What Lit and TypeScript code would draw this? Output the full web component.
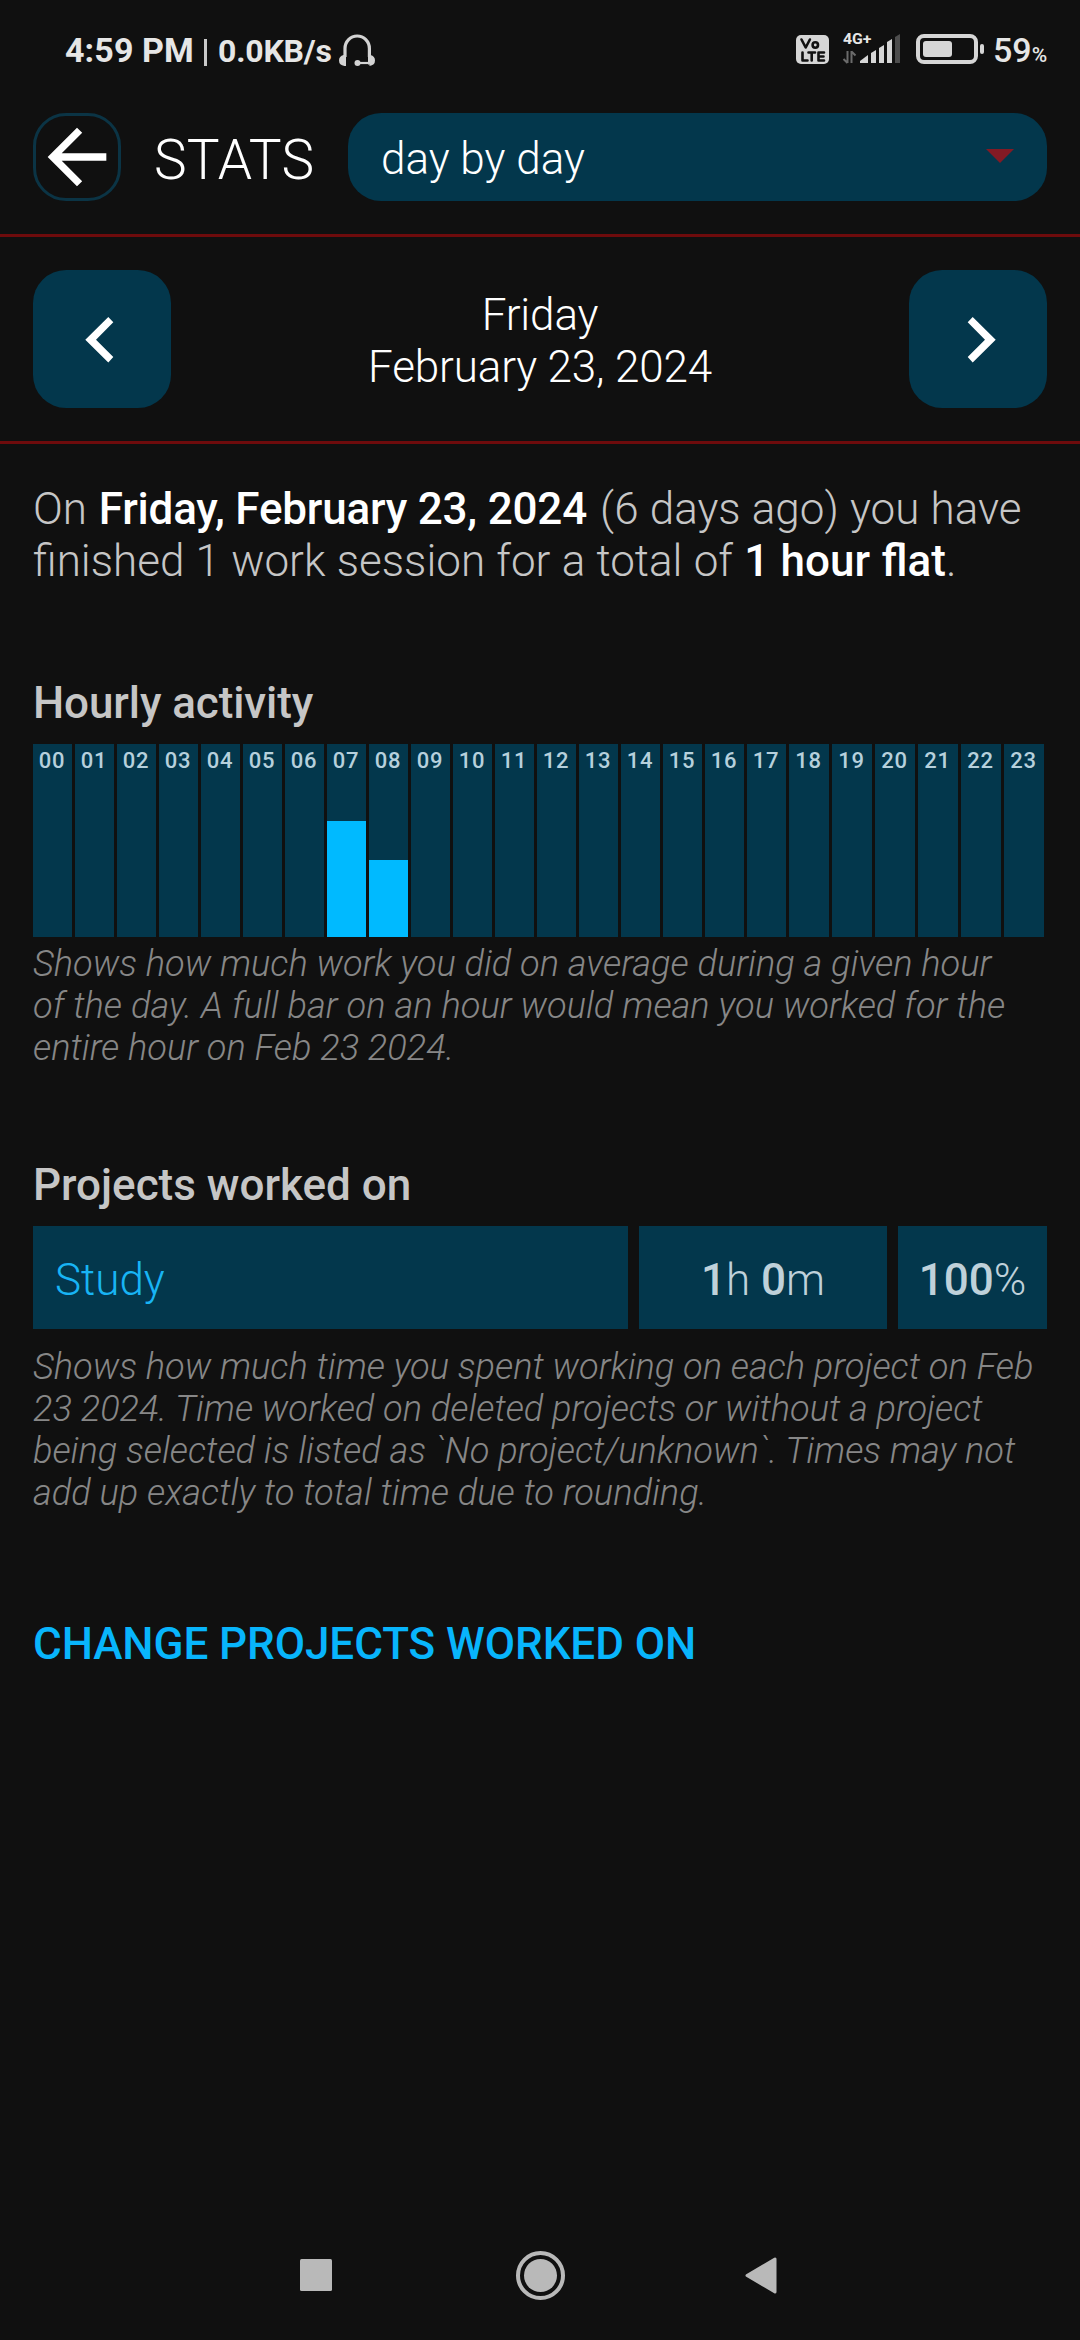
import { LitElement, html, css } from "lit";
import { customElement } from "lit/decorators.js";

const HOURS = Array.from({ length: 24 }, (_, h) => ({
  label: String(h).padStart(2, "0"),
  percent: h === 7 ? 60 : h === 8 ? 40 : 0,
}));

@customElement("status-bar")
class StatusBar extends LitElement {
  static styles = css`
    :host { display: flex; align-items: flex-start; height: 113px; color: #e6e6e6; }
    .time { margin: 28px 0 0 65px; width: 139px; font-size: 34px; line-height: 44px; font-weight: 700; white-space: nowrap; letter-spacing: 0.1px; }
    .rule { margin-top: 39px; width: 3px; height: 27px; background: #c9c9c9; }
    .rate { margin: 29px 0 0 11px; width: 121px; font-size: 32px; line-height: 44px; font-weight: 700; white-space: nowrap; letter-spacing: -0.2px; }
    .headset { display: block; margin-top: 33px; }
    .right { display: block; margin: 30px 0 0 auto; }
    .battery { display: flex; align-items: baseline; margin: 28px 34px 0 9px; width: 53px; font-size: 34px; line-height: 44px; font-weight: 500; }
    .small { font-size: 21px; }
  `;
  render() {
    return html`
      <div class="time">4:59 PM</div>
      <div class="rule"></div>
      <div class="rate">0.0KB/s</div>
      <svg class="headset" width="36" height="34" viewBox="0 0 36 34">
        <path d="M6 24V15.500a12.200 12.500 0 0 1 24.400 0V24" fill="none" stroke="#d3d3d3" stroke-width="3.200" />
        <path d="M4.500 22H7v11H5.500Q0 32 0 27.500T4.500 22zM31.500 22H29v9.500h1.500v1.500Q36 32 36 27.500T31.500 22z" fill="#d3d3d3" />
        <circle cx="18.500" cy="30" r="3" fill="#d3d3d3" />
        <path d="M18 30H30" stroke="#d3d3d3" stroke-width="2.200" />
      </svg>
      <svg class="right" width="190" height="38" viewBox="0 0 190 38">
        <rect x="2" y="5" width="33" height="29" rx="5" fill="#d6d6d6" />
        <g fill="none" stroke="#111" stroke-width="2.600" stroke-linecap="round" stroke-linejoin="round"><path d="M7.500 9.500l4.200 8 4.200-8M8.500 22.500v8h5M14.500 22.500h6.500M17.700 22.500v8M30 22.500h-5.500v8H30M24.500 26.500h5" /><circle cx="21.300" cy="15" r="2.700" /></g>
        <text x="49" y="13.700" font-size="15.500" font-weight="700" fill="#e6e6e6" textLength="28.500" lengthAdjust="spacingAndGlyphs">4G+</text>
        <path d="M53.500 21v12M53.500 33l-4-4M57.500 33V21M57.500 21.500l4 4" fill="none" stroke="#6b6b6b" stroke-width="2" />
        <g fill="#d6d6d6"><path d="M66 33v-2l8-6v8z" /><path d="M77 33V23l5-3v13z" /><path d="M85 33V18l5-3v18z" /><path d="M93 33V12l5-3v24z" /></g>
        <path d="M101 33V7l5-3v29z" fill="#4d4d4d" />
        <rect x="124" y="6" width="58" height="26" rx="6" fill="none" stroke="#d6d6d6" stroke-width="4" />
        <rect x="129" y="11" width="29" height="16" rx="3" fill="#d6d6d6" />
        <rect x="186" y="14" width="4" height="10" rx="2" fill="#d6d6d6" />
      </svg>
      <div class="battery">59<span class="small">%</span></div>
    `;
  }
}

@customElement("hour-chart")
class HourChart extends LitElement {
  static styles = css`
    :host { display: grid; grid-template-columns: repeat(18, 39px) repeat(6, 40px); column-gap: 3px; height: 193px; }
    .slot { position: relative; display: flex; align-items: flex-end; background: #03374c; }
    .fill { width: 100%; background: #00baff; }
    .label { position: absolute; left: 0; right: 1px; top: 4px; text-align: center; font-size: 22px; line-height: 26px; font-weight: 500; letter-spacing: 0.8px; color: #b6d0dc; }
  `;
  render() {
    return HOURS.map(
      (h) => html`<div class="slot">
        <div class="fill" style="height:${h.percent}%"></div>
        <span class="label">${h.label}</span>
      </div>`
    );
  }
}

@customElement("app-root")
class AppRoot extends LitElement {
  static styles = css`
    :host { display: flex; flex-direction: column; width: 1080px; height: 2340px; overflow: hidden; background: #101010; color: #fff; font-family: Roboto, "Liberation Sans", sans-serif; font-size: 44px; line-height: 52px; font-weight: 300; }
    * { box-sizing: border-box; }
    .header { display: flex; align-items: flex-start; height: 124px; padding: 0 33px; border-bottom: 3px solid #6e0b0c; }
    .back { width: 88px; height: 88px; border: 3px solid #0b3445; border-radius: 33px; display: flex; align-items: center; justify-content: center; flex: none; }
    .back svg { flex: none; }
    .title { width: 227px; padding: 15px 0 0 33px; font-size: 55px; line-height: 64px; white-space: nowrap; letter-spacing: 0.2px; }
    .select { flex: 1; height: 88px; border-radius: 33px; background: #03374c; display: flex; align-items: center; justify-content: space-between; padding: 0 33px; }
    .select span { padding-top: 4px; }
    .day { display: flex; align-items: center; justify-content: space-between; height: 207px; padding: 0 33px; border-bottom: 3px solid #6e0b0c; }
    .step { width: 138px; height: 138px; border-radius: 33px; background: #03374c; }
    .step svg { display: block; }
    .date { text-align: center; padding: 4px 0 0; letter-spacing: -0.15px; }
    .body { padding: 39px 33px 0; }
    .summary { color: #c6c6c6; white-space: nowrap; }
    .summary b { color: #fff; font-weight: 500; }
    .when { margin: 0 2px 0 1px; letter-spacing: -0.2px; }
    .ago { word-spacing: 0.4px; }
    .total { word-spacing: 0.5px; }
    h2 { margin: 0; font-size: 44px; line-height: 52px; font-weight: 500; color: #c6c6c6; }
    .first { margin-top: 90px; margin-bottom: 15px; letter-spacing: -0.1px; }
    .second { margin-top: 90px; margin-bottom: 15px; }
    .note { font-style: italic; font-size: 36.2px; line-height: 42px; color: #878787; white-space: nowrap; }
    .note1 { margin-top: 6px; }
    .note2 { margin-top: 17px; }
    .wide { word-spacing: 0.2px; }
    .row { display: grid; grid-template-columns: 595px 248px 149px; column-gap: 11px; height: 103px; }
    .cell { display: flex; align-items: center; justify-content: center; background: #03374c; color: #bfd1da; white-space: pre; padding-top: 5px; }
    .cell b { font-weight: 500; }
    .name { justify-content: flex-start; padding-left: 22px; color: #18b4f4; }
    .change { margin-top: 104px; font-weight: 500; color: #08b5fc; letter-spacing: -0.06px; }
    .nav { margin-top: auto; height: 129px; display: flex; justify-content: center; }
  `;
  render() {
    return html`
      <status-bar></status-bar>
      <div class="header">
        <div class="back">
          <svg width="88" height="88" viewBox="0 0 24 24" fill="#fff"><path d="M20 11H7.830l5.590-5.590L12 4l-8 8 8 8 1.410-1.410L7.830 13H20z" /></svg>
        </div>
        <div class="title">STATS</div>
        <div class="select">
          <span>day by day</span>
          <svg width="28" height="20" viewBox="0 0 28 20"><path d="M0 2h28L14 16z" fill="#831a24" /></svg>
        </div>
      </div>
      <div class="day">
        <div class="step"><svg width="138" height="138" viewBox="0 0 138 138" fill="#fff"><path d="M75.300 47l5 5.300L63 69.700l17.300 17.400-5 5.300L52.300 69.700z" /></svg></div>
        <div class="date">Friday<br />February 23, 2024</div>
        <div class="step"><svg width="138" height="138" viewBox="0 0 138 138" fill="#fff"><path d="M63.700 47l-5 5.300L76 69.700 58.700 87.100l5 5.300L86.700 69.700z" /></svg></div>
      </div>
      <div class="body">
        <div class="summary">On <b class="when">Friday, February 23, 2024</b><span class="ago"> (6 days ago) you have</span><br /><span class="total">finished 1 work session for a total of <b>1 hour flat</b>.</span></div>
        <h2 class="first">Hourly activity</h2>
        <hour-chart></hour-chart>
        <div class="note note1">Shows how much work you did on average during a given hour<br /><span class="wide">of the day. A full bar on an hour would mean you worked for the</span><br />entire hour on Feb 23 2024.</div>
        <h2 class="second">Projects worked on</h2>
        <div class="row">
          <div class="cell name">Study</div>
          <div class="cell"><b>1</b>h <b>0</b>m</div>
          <div class="cell"><b>100</b>%</div>
        </div>
        <div class="note note2">Shows how much time you spent working on each project on Feb<br />23 2024. Time worked on deleted projects or without a project<br />being selected is listed as \`No project/unknown\`. Times may not<br />add up exactly to total time due to rounding.</div>
        <div class="change">CHANGE PROJECTS WORKED ON</div>
      </div>
      <div class="nav">
        <svg width="480" height="129" viewBox="0 0 480 129" fill="#b9b9b9">
          <rect x="0" y="48" width="32" height="32" rx="1.500" />
          <circle cx="240.500" cy="64.500" r="22.500" fill="none" stroke="#b9b9b9" stroke-width="4" />
          <circle cx="240.500" cy="64.500" r="16.500" />
          <path d="M447 64.500L475 48V81z" stroke="#b9b9b9" stroke-width="3" stroke-linejoin="round" />
        </svg>
      </div>
    `;
  }
}
